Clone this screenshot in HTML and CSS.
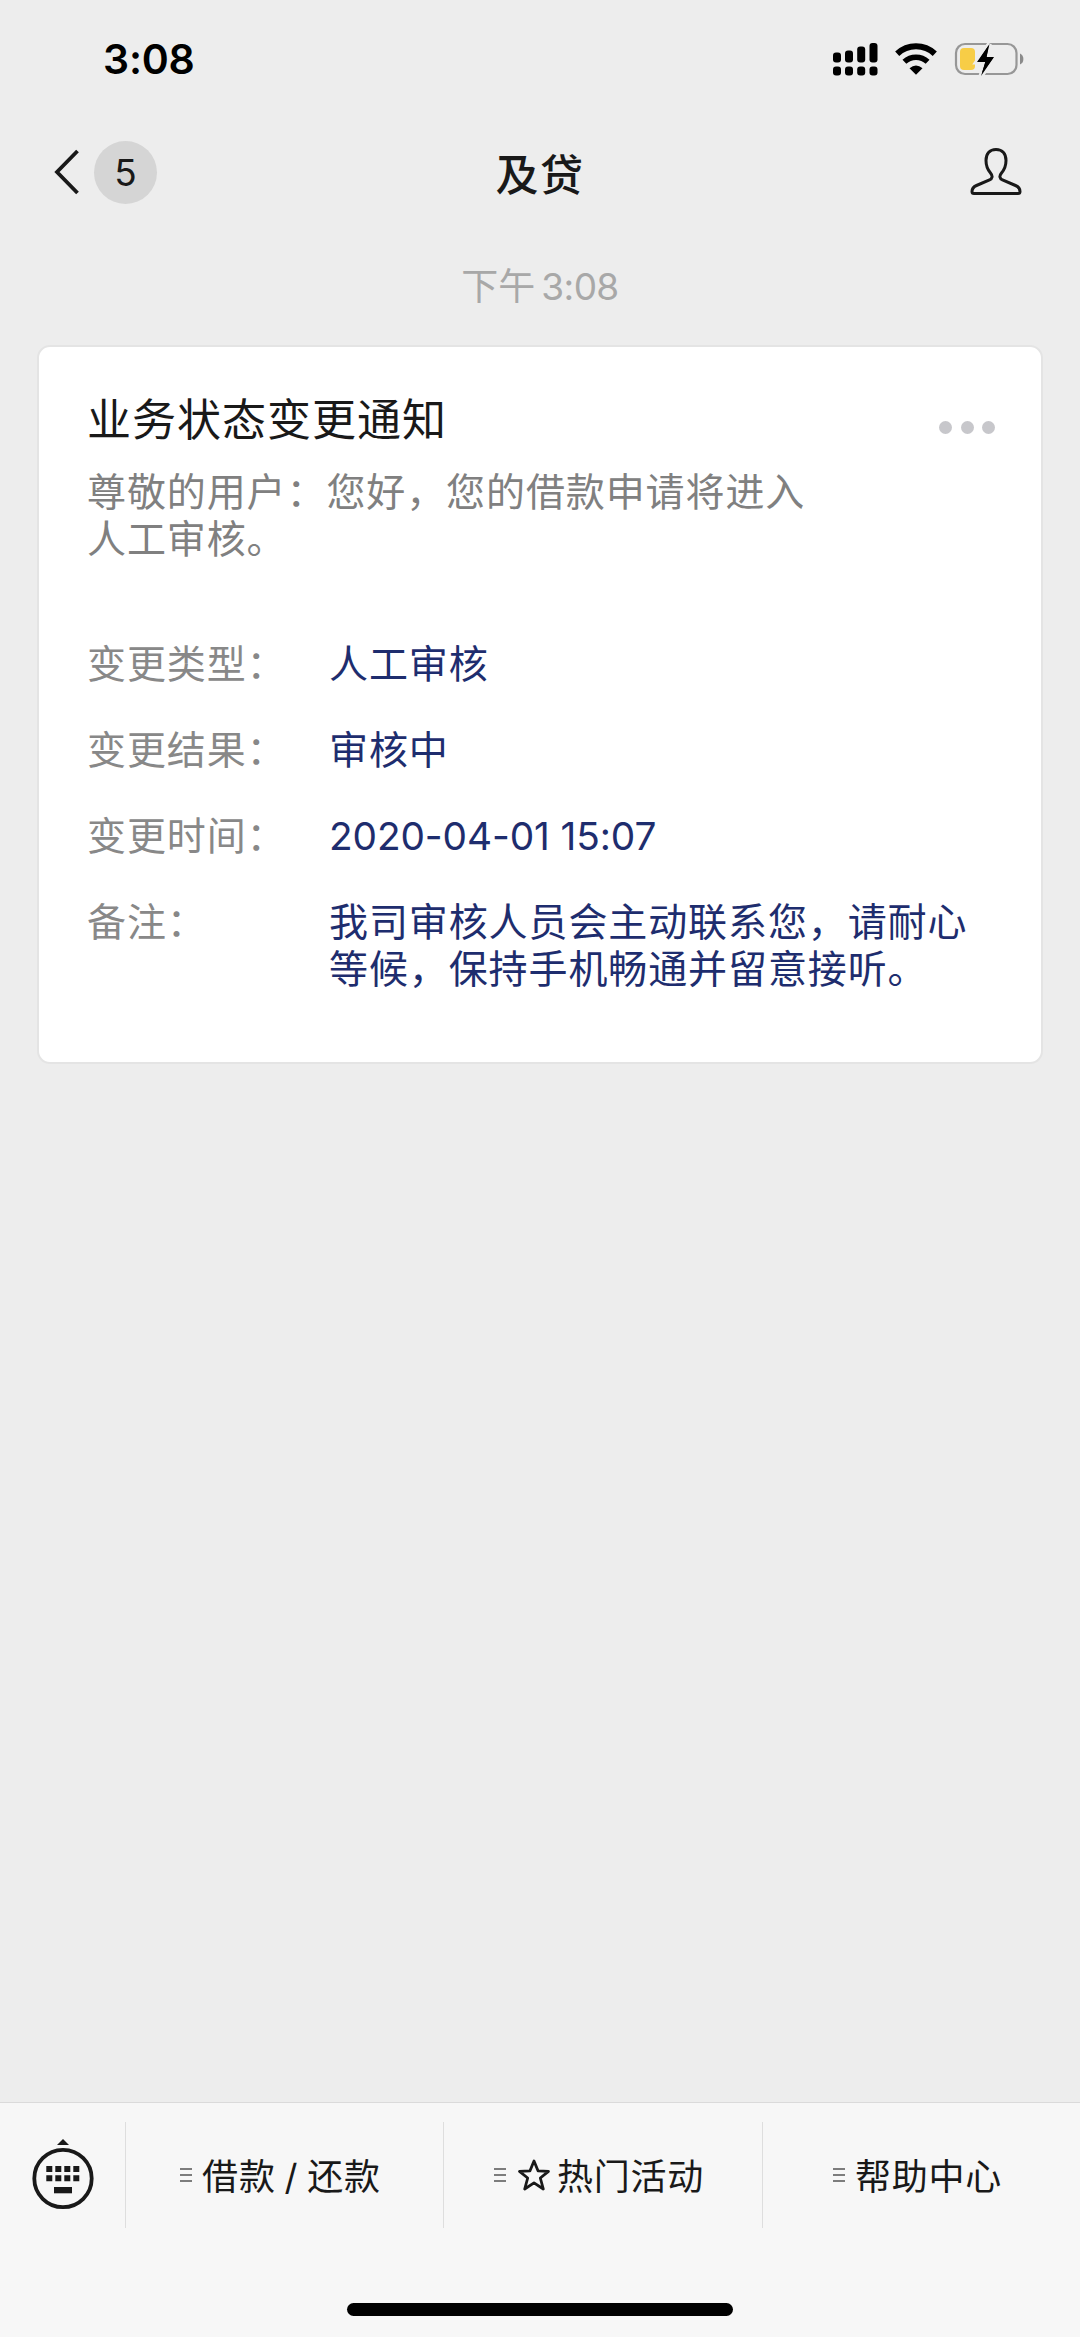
FILE: index.html
```html
<!DOCTYPE html>
<html lang="zh-CN">
<head>
  <meta charset="UTF-8">
  <meta name="viewport" content="width=device-width, initial-scale=1.0">
  <title>及贷</title>
  <link rel="stylesheet" href="styles.css">
</head>
<body>
  <div class="status-bar">
    <span class="clock">3:08</span>
    <div class="status-icons">
      <svg class="signal" width="45" height="33" viewBox="0 0 45 33">
        <rect x="0" y="9.5" width="8" height="10" rx="3"/>
        <rect x="12" y="7.5" width="8" height="12" rx="3"/>
        <rect x="24.2" y="3.5" width="8" height="16" rx="3"/>
        <rect x="36.5" y="0" width="8" height="19.5" rx="3"/>
        <rect x="0" y="23.5" width="8" height="9" rx="3"/>
        <rect x="12" y="23.5" width="8" height="9" rx="3"/>
        <rect x="24.2" y="23.5" width="8" height="9" rx="3"/>
        <rect x="36.5" y="23.5" width="8" height="9" rx="3"/>
      </svg>
      <svg class="wifi" width="42" height="32" viewBox="0 0 42 32">
        <path d="M2.2 10.8 A27.5 27.5 0 0 1 39.8 10.8" fill="none" stroke="#000" stroke-width="6"/>
        <path d="M9.4 18.8 A17 17 0 0 1 32.6 18.8" fill="none" stroke="#000" stroke-width="5.6"/>
        <path d="M14.5 25.2 Q21 19.6 27.5 25.2 L21 31.8 Z"/>
      </svg>
      <svg class="battery" width="70" height="36" viewBox="0 0 70 36">
        <rect x="2" y="3" width="60.5" height="30" rx="9" fill="none" stroke="#979797" stroke-width="2.2"/>
        <path d="M66 12.5 Q69.4 14 69.4 18 Q69.4 22 66 23.5 Z" fill="#8a8a8a"/>
        <rect x="6" y="7" width="15" height="22" rx="4" fill="#f7cd46"/>
        <path d="M35.5 3 L23 21 L31.5 21 L27 35 L40 16 L32.5 16 Z" fill="#000" stroke="#ededed" stroke-width="5" paint-order="stroke"/>
        <path d="M34.5 4.5 L24.5 20 L31.5 20 L27.8 32.5 L39.5 16.5 L32.5 16.5 Z" fill="#000"/>
      </svg>
    </div>
  </div>

  <div class="nav-bar">
    <div class="nav-left">
      <svg width="26" height="46" viewBox="0 0 26 46">
        <path d="M23.5 2 L3 23 L23.5 44" fill="none" stroke="#191919" stroke-width="3.8"/>
      </svg>
      <span class="unread">5</span>
    </div>
    <h1>及贷</h1>
    <svg class="profile" width="52" height="50" viewBox="0 0 52 50">
      <path d="M26 2.5 C19.5 2.5 16 7 16 13.5 C16 19 17.5 22.5 20.5 26 C23 29 22.5 31.5 19.5 33 L6.5 38.5 C3 40 2 42 2 44.5 Q2 46.5 4 46.5 L48 46.5 Q50 46.5 50 44.5 C50 42 49 40 45.5 38.5 L32.5 33 C29.5 31.5 29 29 31.5 26 C34.5 22.5 36 19 36 13.5 C36 7 32.5 2.5 26 2.5 Z" fill="none" stroke="#191919" stroke-width="3"/>
    </svg>
  </div>

  <main>
    <div class="time">下午<span>3:08</span></div>

    <div class="card">
      <div class="card-head">
        <h2>业务状态变更通知</h2>
        <div class="more"><i></i><i></i><i></i></div>
      </div>
      <p class="intro">尊敬的用户：您好，您的借款申请将进入人工审核。</p>
      <dl>
        <dt>变更类型：</dt>
        <dd>人工审核</dd>
        <dt>变更结果：</dt>
        <dd>审核中</dd>
        <dt>变更时间：</dt>
        <dd class="date">2020-04-01 15:07</dd>
        <dt>备注：</dt>
        <dd>我司审核人员会主动联系您，请耐心等候，保持手机畅通并留意接听。</dd>
      </dl>
    </div>
  </main>

  <footer>
    <div class="menu">
      <div class="keyboard">
        <svg width="62" height="72" viewBox="0 0 62 72">
          <path d="M31 1 L37 7 L25 7 Z"/>
          <circle cx="31" cy="40.5" r="28.7" fill="none" stroke="#191919" stroke-width="3.8"/>
          <path d="M14.3 28h6v6h-6z M23.3 28h6v6h-6z M32.3 28h6v6h-6z M41.3 28h6v6h-6z"/>
          <path d="M14.3 37.2h6v6h-6z M23.3 37.2h6v6h-6z M32.3 37.2h6v6h-6z M41.3 37.2h6v6h-6z"/>
          <path d="M22 49h18v6.3H22z"/>
        </svg>
      </div>
      <div class="menu-item">
        <svg class="lines" width="12" height="14" viewBox="0 0 12 14"><path d="M0 1h12M0 7h12M0 13h12"/></svg>
        <span class="loan">借款 / 还款</span>
      </div>
      <div class="menu-item">
        <svg class="lines" width="12" height="14" viewBox="0 0 12 14"><path d="M0 1h12M0 7h12M0 13h12"/></svg>
        <svg class="star" width="34" height="34" viewBox="0 0 34 34">
          <path d="M17 3 L21 12.8 L31.5 13.3 L23.3 20 L26.3 31 L17 24.8 L7.7 31 L10.7 20 L2.5 13.3 L13 12.8 Z"/>
        </svg>
        <span>热门活动</span>
      </div>
      <div class="menu-item">
        <svg class="lines" width="12" height="14" viewBox="0 0 12 14"><path d="M0 1h12M0 7h12M0 13h12"/></svg>
        <span>帮助中心</span>
      </div>
    </div>
    <div class="home-indicator"></div>
  </footer>
</body>
</html>
```
FILE: styles.css
```css
* {
  box-sizing: border-box;
}

body {
  display: flex;
  flex-direction: column;
  width: 1080px;
  height: 2337px;
  margin: 0;
  background: #ededed;
  color: #191919;
  font-family: Inter, "Noto Sans CJK SC", sans-serif;
}

svg {
  display: block;
  flex-shrink: 0;
}

h1, h2, p, dl, dd {
  margin: 0;
}

.status-bar {
  display: flex;
  justify-content: space-between;
  align-items: center;
  height: 118px;
  padding: 0 56px 0 103px;
  color: #000;
}

.clock {
  font-size: 41px;
  font-weight: 600;
  letter-spacing: -0.2px;
}

.status-icons {
  display: flex;
  align-items: center;
}

.signal {
  margin-right: 17px;
}

.wifi {
  margin-right: 17px;
}

.nav-bar {
  display: grid;
  grid-template-columns: 1fr auto 1fr;
  align-items: center;
  height: 108px;
  padding: 0 54px;
}

.nav-left {
  display: flex;
  align-items: center;
  gap: 14px;
}

.unread {
  width: 63px;
  height: 63px;
  border-radius: 50%;
  background: #d5d5d5;
  font-size: 37px;
  line-height: 64px;
  text-align: center;
}

.nav-bar h1 {
  font-size: 43px;
  font-weight: 500;
  letter-spacing: 1.5px;
}

.profile {
  justify-self: end;
  margin-right: 4px;
}

main {
  flex: 1;
  padding: 36px 37px 0;
}

.time {
  height: 50px;
  line-height: 50px;
  font-size: 37px;
  color: #a8a8a8;
  text-align: center;
}

.time span {
  margin-left: 6px;
  letter-spacing: -0.6px;
}

.card {
  height: 719px;
  margin-top: 33px;
  padding: 47px 46px 0 48px;
  background: #fff;
  border: 2px solid #e4e4e4;
  border-radius: 13px;
}

.card-head {
  display: flex;
  justify-content: space-between;
}

.card h2 {
  font-size: 44px;
  font-weight: 400;
  line-height: 52px;
  letter-spacing: 1px;
}

.more {
  display: flex;
  gap: 8.5px;
  margin-top: 27px;
}

.more i {
  width: 13px;
  height: 13px;
  border-radius: 50%;
  background: #c7c7cb;
}

.intro {
  width: 740px;
  margin-top: 22px;
  font-size: 39px;
  line-height: 47px;
  letter-spacing: 0.9px;
  color: #808080;
}

.card dl {
  display: grid;
  grid-template-columns: 242px 660px;
  row-gap: 39px;
  margin-top: 78px;
  font-size: 39px;
  line-height: 47px;
  letter-spacing: 0.9px;
}

.card dt {
  color: #888;
}

.card dd {
  color: #1e2d6e;
}

.card .date {
  font-size: 38.8px;
  letter-spacing: -0.1px;
}

footer {
  display: flex;
  flex-direction: column;
  justify-content: space-between;
  align-items: center;
  height: 235px;
  padding: 19px 0 21px;
  background: #f7f7f7;
  border-top: 1px solid #dadada;
}

.menu {
  display: grid;
  grid-template-columns: 125px 318px 319px 318px;
  width: 1080px;
  height: 106px;
}

.keyboard {
  display: flex;
  justify-content: center;
  padding-top: 16px;
  fill: #191919;
}

.menu-item {
  display: flex;
  justify-content: center;
  align-items: center;
  padding-right: 8px;
  border-left: 1px solid #dedede;
  font-size: 36px;
  letter-spacing: 0.8px;
}

.menu-item span {
  margin-bottom: 2px;
}

.loan {
  word-spacing: -2px;
}

.lines {
  margin-right: 10px;
  stroke: #7d7d7d;
  stroke-width: 2;
}

.star {
  margin: 0 6px 0 1px;
  fill: none;
  stroke: #191919;
  stroke-width: 2.8;
  stroke-linejoin: round;
}

.home-indicator {
  width: 386px;
  height: 13px;
  border-radius: 7px;
  background: #000;
}
```
